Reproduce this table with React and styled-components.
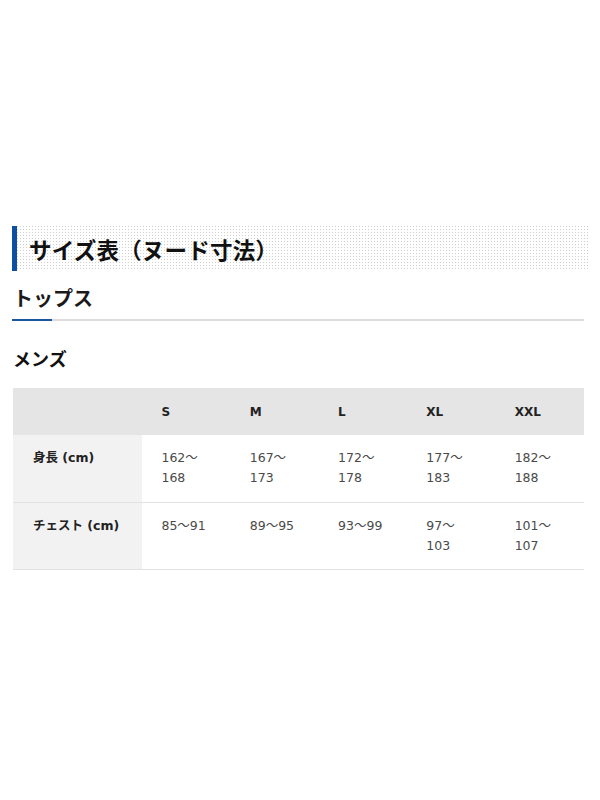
import React from "react";
import styled, { createGlobalStyle } from "styled-components";

const Global = createGlobalStyle`
  html, body { margin: 0; padding: 0; background: #fff; }
  body { font-family: "DejaVu Sans", "Noto Sans CJK JP", sans-serif; color: #222; }
`;

const Page = styled.div`
  padding: 226px 16px 0 12px;
  width: 572px;
`;

const SectionTitle = styled.h2`
  margin: 0;
  height: 45px;
  width: 576px;
  box-sizing: border-box;
  display: flex;
  align-items: center;
  padding-left: 12px;
  border-left: 5px solid #0d4fa3;
  font-family: "Noto Sans CJK JP", sans-serif;
  font-size: 22.5px;
  font-weight: 700;
  letter-spacing: 0.2px;
  color: #111;
  background-color: #fff;
  background-image:
    linear-gradient(to right, #fff 2px, transparent 2px),
    linear-gradient(to bottom, #fff 2px, #cfcfcf 2px);
  background-size: 3px 3px;
  background-position: 4px 1px;
`;

const SubTitle = styled.h3`
  margin: 14px 0 0;
  padding: 0 0 8px 1px;
  position: relative;
  font-family: "Noto Sans CJK JP", sans-serif;
  font-size: 20px;
  font-weight: 700;
  line-height: 26px;
  color: #1a1a1a;
  border-bottom: 2px solid #dcdcdc;
  &::after {
    content: "";
    position: absolute;
    left: 0;
    bottom: -2px;
    width: 40px;
    height: 2px;
    background: #1d56a0;
  }
`;

const GroupTitle = styled.h4`
  margin: 24px 0 0 1px;
  font-family: "Noto Sans CJK JP", sans-serif;
  font-size: 18px;
  font-weight: 700;
  line-height: 26px;
  color: #111;
`;

const Table = styled.table`
  margin: 17px 0 0 1px;
  width: 571px;
  border-collapse: collapse;
  table-layout: fixed;
  font-size: 12.5px;
`;

const Col = styled.col`
  width: ${(p) => p.$w};
`;

const HeadCell = styled.th`
  background: #e5e5e5;
  height: 47px;
  padding: 0 0 0 19px;
  text-align: left;
  font-weight: 700;
  font-size: 12px;
  color: #222;
`;

const Row = styled.tr`
  border-bottom: 1px solid #e2e2e2;
`;

const LabelCell = styled.th`
  background: #f2f2f2;
  height: 67px;
  box-sizing: border-box;
  padding: 13px 0 0 20px;
  text-align: left;
  vertical-align: top;
  font-weight: 700;
  font-size: 12.5px;
  line-height: 20px;
  color: #222;
`;

const Cell = styled.td`
  padding: 13px 10px 0 19px;
  vertical-align: top;
  line-height: 20px;
  color: #4a4a4a;
  font-size: 12.5px;
`;

const sizes = ["S", "M", "L", "XL", "XXL"];
const rows = [
  { label: "身長 (cm)", values: [["162～", "168"], ["167～", "173"], ["172～", "178"], ["177～", "183"], ["182～", "188"]] },
  { label: "チェスト (cm)", values: [["85～91"], ["89～95"], ["93～99"], ["97～", "103"], ["101～", "107"]] },
];

export default function App() {
  return (
    <>
      <Global />
      <Page>
        <SectionTitle>サイズ表（ヌード寸法）</SectionTitle>
        <SubTitle>トップス</SubTitle>
        <GroupTitle>メンズ</GroupTitle>
        <Table>
          <colgroup>
            <Col $w="129px" />
            {sizes.map((s) => (
              <Col key={s} $w="88px" />
            ))}
          </colgroup>
          <thead>
            <tr>
              <HeadCell />
              {sizes.map((s) => (
                <HeadCell key={s}>{s}</HeadCell>
              ))}
            </tr>
          </thead>
          <tbody>
            {rows.map((r) => (
              <Row key={r.label}>
                <LabelCell>{r.label}</LabelCell>
                {r.values.map((v, i) => (
                  <Cell key={i}>
                    {v.map((line, j) => (
                      <div key={j}>{line}</div>
                    ))}
                  </Cell>
                ))}
              </Row>
            ))}
          </tbody>
        </Table>
      </Page>
    </>
  );
}
